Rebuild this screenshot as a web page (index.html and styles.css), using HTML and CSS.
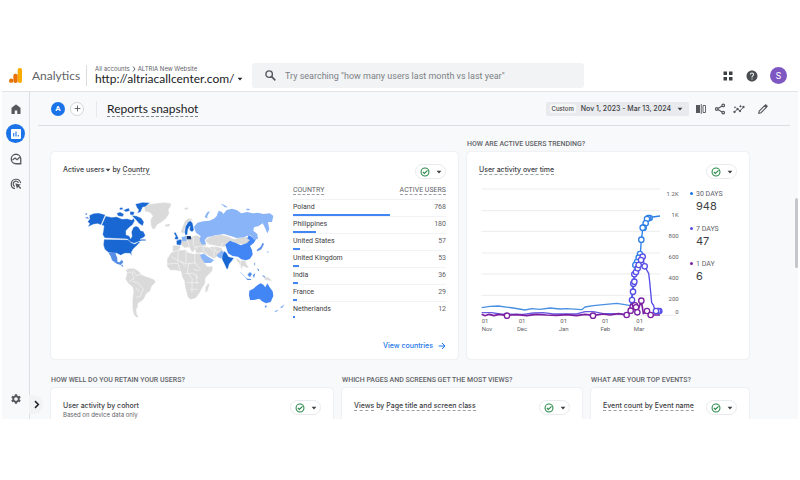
FILE: index.html
```html
<!DOCTYPE html>
<html lang="en">
<head>
<meta charset="utf-8">
<title>Analytics</title>
<link rel="stylesheet" href="styles.css">
</head>
<body>
<svg class="defs" aria-hidden="true">
  <symbol id="check" viewBox="0 0 24 24"><circle cx="12" cy="12" r="9.5" fill="none" stroke="#2b8a4b" stroke-width="2.6"/><path d="M7 12l3.5 3.5L18 8" fill="none" stroke="#2b8a4b" stroke-width="2.8"/></symbol>
  <symbol id="caret" viewBox="0 0 10 10"><path d="M1 3h8L5 7.500z" fill="currentColor"/></symbol>
</svg>
<div class="app">
  <header class="topbar">
    <svg class="logo" viewBox="0 0 39 45"><rect x="26" y="0" width="13" height="45" rx="6" fill="#f9ab00"/><rect x="13" y="17" width="13" height="28" rx="6" fill="#e8710a"/><circle cx="6.500" cy="38" r="6.500" fill="#e37400"/></svg>
    <span class="brand">Analytics</span>
    <div class="property">
      <div class="crumbs">All accounts <svg class="chev" viewBox="0 0 8 12"><path d="M2 1l4 5-4 5" fill="none" stroke="currentColor" stroke-width="2"/></svg> ALTRIA New Website</div>
      <button class="url">http://altriacallcenter.com/<svg class="caret"><use href="#caret"/></svg></button>
    </div>
    <label class="search">
      <svg viewBox="0 0 24 24"><circle cx="9.500" cy="9.500" r="6" fill="none" stroke="#55595e" stroke-width="2.600"/><path d="M14 14l7 7" stroke="#55595e" stroke-width="3"/></svg>
      <input type="text" aria-label="Search" placeholder="Try searching &quot;how many users last month vs last year&quot;">
    </label>
    <div class="account">
      <button aria-label="Apps"><svg viewBox="0 0 24 24" fill="#3c4043"><path d="M3 3h7v7H3zM14 3h7v7h-7zM3 14h7v7H3zM14 14h7v7h-7z"/></svg></button>
      <button aria-label="Help"><svg viewBox="0 0 24 24" fill="#4a4d51"><path d="M12 1C5.900 1 1 5.900 1 12s4.900 11 11 11 11-4.900 11-11S18.100 1 12 1zm1 18h-2v-2h2v2zm2.070-7.750l-.9.920C13.450 12.900 13 13.500 13 15h-2v-.5c0-1.100.45-2.100 1.170-2.830l1.240-1.260c.37-.36.59-.86.59-1.410 0-1.100-.9-2-2-2s-2 .9-2 2H8c0-2.210 1.790-4 4-4s4 1.790 4 4c0 .88-.36 1.680-.93 2.250z"/></svg></button>
      <button class="avatar">S</button>
    </div>
  </header>
  <div class="body">
    <nav class="rail">
      <a href="#" aria-label="Home"><svg viewBox="0 0 24 24" fill="#55595e"><path d="M3 22V10.500a2 2 0 0 1 .8-1.600L11 3.400a1.700 1.700 0 0 1 2 0l7.200 5.500a2 2 0 0 1 .8 1.600V22h-6.500v-7h-5v7z"/></svg></a>
      <a href="#" class="on" aria-label="Reports"><svg viewBox="0 0 24 24"><rect x="2" y="2" width="20" height="20" rx="2" fill="#fff"/><path d="M7.500 10v7M12 7v10M16.500 14v3" stroke="#1a73e8" stroke-width="2.200"/></svg></a>
      <a href="#" aria-label="Explore"><svg viewBox="0 0 24 24" fill="none" stroke="#55595e" stroke-width="2.600"><path d="M21.500 21.500H12A9.500 9.500 0 1 1 21.500 12z"/><path d="M5 14l5-4 4 3.500 5.500-5"/></svg></a>
      <a href="#" aria-label="Advertising"><svg viewBox="0 0 24 24" fill="none" stroke="#55595e" stroke-width="2.400"><path d="M10 21.300A9.500 9.500 0 1 1 21.300 10"/><path d="M9.500 17A5.600 5.600 0 1 1 17 9.500"/><path d="M10.500 10.500l3.500 11 2.200-4 4.300 4.500 2-2-4.500-4.300 4-2z" fill="#55595e" stroke="none"/></svg></a>
      <a href="#" class="admin" aria-label="Admin"><svg viewBox="0 0 24 24" fill="#55595e"><path d="M19.140 12.940c.04-.3.060-.61.060-.94 0-.32-.02-.64-.07-.94l2.030-1.580c.18-.14.230-.41.120-.61l-1.920-3.320c-.12-.22-.37-.29-.59-.22l-2.390.96c-.5-.38-1.030-.7-1.620-.94l-.36-2.540c-.04-.24-.24-.41-.48-.41h-3.840c-.24 0-.43.170-.47.410l-.36 2.540c-.59.240-1.130.57-1.620.94l-2.390-.96c-.22-.08-.47 0-.59.220L2.740 8.870c-.12.210-.08.470.120.610l2.030 1.580c-.05.3-.09.630-.09.940s.020.640.070.940l-2.030 1.580c-.18.140-.23.410-.12.610l1.920 3.320c.12.220.37.290.59.220l2.390-.96c.5.380 1.030.7 1.620.94l.36 2.540c.05.240.24.410.48.410h3.840c.24 0 .44-.17.470-.41l.36-2.540c.59-.24 1.130-.56 1.620-.94l2.390.96c.22.080.47 0 .59-.22l1.920-3.320c.12-.22.070-.47-.12-.61l-2.010-1.580zM12 15.600c-1.980 0-3.600-1.620-3.600-3.600s1.620-3.600 3.600-3.600 3.600 1.620 3.600 3.600-1.620 3.600-3.600 3.600z"/></svg></a>
      <button class="expand" aria-label="Expand"><svg viewBox="0 0 12 12"><path d="M4 1.500L8.500 6 4 10.500" fill="none" stroke="#202124" stroke-width="2"/></svg></button>
    </nav>
    <main>
      <div class="toolbar">
        <button class="badge">A</button>
        <button class="add" aria-label="Add comparison"><svg viewBox="0 0 12 12"><path d="M6 1v10M1 6h10" stroke="#55595e" stroke-width="1.500"/></svg></button>
        <h1><span>Reports snapshot</span></h1>
        <button class="date"><span class="chip">Custom</span>Nov 1, 2023 - Mar 13, 2024<svg class="caret"><use href="#caret"/></svg></button>
        <div class="tools">
          <button aria-label="Compare"><svg viewBox="0 0 24 24"><path d="M2 4h8v16H2z" fill="#55595e"/><path d="M12.500 2v20M16 5h5v14h-5z" fill="none" stroke="#55595e" stroke-width="1.800"/></svg></button>
          <button aria-label="Share"><svg viewBox="0 0 24 24" fill="none" stroke="#55595e" stroke-width="2.400"><path d="M8 11l8-5M8 13l8 5"/><circle cx="5.500" cy="12" r="2.600"/><circle cx="18.500" cy="4.800" r="2.600"/><circle cx="18.500" cy="19.200" r="2.600"/></svg></button>
          <button aria-label="Insights"><svg viewBox="0 0 24 24" fill="#55595e"><path d="M3 18l6-6 5 4 7-8" fill="none" stroke="#55595e" stroke-width="2"/><circle cx="3" cy="18" r="2.300"/><circle cx="9" cy="12" r="2.300"/><circle cx="14" cy="16" r="2.300"/><circle cx="21" cy="8" r="2.300"/><path d="M15 3l1 2.500L18.500 6.500 16 7.500 15 10l-1-2.500-2.500-1L14 5.500zM4 6l.8 1.700 1.700.8-1.700.8L4 11l-.8-1.700-1.700-.8 1.700-.8z"/></svg></button>
          <button class="edit" aria-label="Edit"><svg viewBox="0 0 24 24"><path d="M3.500 20.500l1-4.500L15 5.500l3.500 3.500L8 19.500z" fill="none" stroke="#55595e" stroke-width="2.200"/><path d="M15 5l2.500-2.500 4 4L19 9z" fill="#55595e" stroke="#55595e"/></svg></button>
        </div>
      </div>
      <div class="content">
        <section class="row first">
          <article class="col">
            <h2>&nbsp;</h2>
            <div class="card tall">
              <div class="head"><h3>Active users<svg class="caret"><use href="#caret"/></svg> by <u>Country</u></h3><button class="pill" aria-label="Data quality"><svg class="ok"><use href="#check"/></svg><svg class="caret"><use href="#caret"/></svg></button></div>
              <div class="split">
                <svg class="map" viewBox="-21 0 681 390" role="img" aria-label="Active users by country">
                  <g fill="#dadada" stroke="#fff" stroke-width="1.500">
                    <path d="M222 48l18-6 22-3 20-2 22 3-2 10-6 8 2 12-8 14-14 12-14 8-8 14-8-2-4-12 0-16 6-10-8-10-16-4z"/>
                    <path d="M284 104l12-3 6 3-6 6-10 0zM340 57l8-5 10 2-8 6z"/>
                    <path d="M168 238l10-3 14 0 14 8 8 10 12 6 14 4 14 6 3 8-12 12-4 14-12 8-6 14-10 10-8 4-2 12-4 8 2 14 6 9-8 0-8-8-4-20 0-24 3-24-2-14-12-10-10-14 4-14z"/>
                    <path d="M168 248l18-2 6 20-14 8M190 240l8 16 18-2M188 274l18 6 14 18-10 22-12 2M196 294l14 12" fill="none"/>
                    <path d="M332 125l12-32 12-8 14 2-8 6-12 8-4 24-8 6zM318 150l14-4 16 4 20-12 16-2 14 12 12 18-10 6-12 10-14-2-8 8-8-16-14 2-10-8zM308 166l20 0 4 6-10 16-14 0z"/>
                    <path d="M303 188l20-7 26-2 4 8 18 4 20-2 10 24 10 16 18 0-2 14-20 20-2 18-10 16-6 12-12 16-16 4-8-8-8-30-2-18-6-10-4-18-16-4-16 0-10-12 0-22zM406 292l8-12 5 2-6 22-8 4z"/>
                    <path d="M304 200l20 12 24 10 30-4M324 183v30M348 180v40M374 190v28l18 20M292 222l32-2 6 22M332 212l16 20M346 250h24l16 14M356 220l-4 28 18 22M370 238l18 4M350 278h36M360 298h22M366 268v40M378 252l4 30" fill="none"/>
                    <path d="M404 150l20-12 26-5 24 6 18 8 22-6 24 0 14 8-8 10-22 6-24-4-12-8-16 16-18 4-16-6-20-2zM374 172l20-4 24 4 14-4 22 4 8 14-18 12-12 8-16-8-20-10-18 2zM498 204l14 8 14-2 4 14 8 8-8 2-12-6-2 12-10-22-8-8zM582 260l14 2 12 12-12-2-12-2z"/>
                    <path d="M400 170v12l14 12M418 172l14 12v18M430 168l8 18 22 0M412 158l20 12 26 0M458 158l-6 14M352 150l6 20M370 140v24l14 12M384 150h22M510 210l2 18" fill="none"/>
                  </g>
                  <g fill="#1967d2" stroke="#fff" stroke-width="1.200">
                    <path d="M58 76l14-6 14-1 20 5-13 31-10-4-12 2-18 8 6-10-6-6 6-8z"/>
                    <path d="M107 78L125 82 140 80 156 87 172 86 186 90 190 84 194 92 188 104 178 112 168 122 168 134 178 138 182 146 186 138 184 126 190 112 198 108 206 112 212 122 220 124 226 136 222 142 210 148 226 148 228 152 214 152 204 156 192 160 180 156 172 147 104 144 98 134 102 108 95 105z"/>
                    <path d="M102 148L174 149 184 158 194 162 206 155 210 157 200 167 190 177 184 187 186 197 180 190 164 190 152 196 140 190 116 188 104 178 100 164z"/>
                    <path d="M196 42l22-5 22 1-14 12-8 2-6 14-10 4 4-10-6-8zM184 76L200 78 214 84 222 96 218 108 206 100 198 90zM140 70l10-4 12 6-4 8-14-2zM160 60l16-6 4 8-12 4zM180 64l14 2-4 10-10-2zM148 54l8-2 4 6-10 2z"/>
                    <path d="M344 128L346 110 354 96 362 92 368 100 372 120 366 126 358 120 360 108 354 118 352 134 346 136zM319 152l12-4 5 4-4 14-12-2zM313 147l4-8-6-10 6-2 8 16 0 6z"/>
                    <path d="M456 188L464 184 470 190 476 200 492 204 486 212 478 222 474 236 470 238 464 224 456 208z"/>
                  </g>
                  <path d="M44 72l8-3-2 6zM44 84l10-4 2 6z" fill="#568ee5"/>
                  <g fill="#4285f4">
                    <path d="M116 189l20 0 6 16 0 10 6 2 8-8 4 8-8 8-12-4-14-10-4-12zM152 225l6-1 2 8z" fill="#568ee5"/>
                    <path d="M466 164L480 152 496 158 512 166 530 160 540 150 532 146 536 134 546 142 558 148 552 158 540 168 546 180 548 194 540 206 528 211 514 208 504 200 488 198 474 190z"/>
                    <path d="M538 302L550 296 562 286 572 280 580 284 586 292 592 280 598 290 608 304 610 318 602 336 588 340 576 334 568 326 552 330 540 330 537 316zM584 347l7 0-4 7z"/>
                    <path d="M510 246l16 16 6 8 12 0-2-3-10-1-20-19zM532 254l8-8 6 6-6 10zM548 256l8-6-4 14zM552 216l4 6-2 6zM562 234l6 6-4 4zM560 180l12-10 6-12 4 4-8 16-12 6zM576 256l8 2 0 6z" fill="#568ee5"/>
                  </g>
                  <g fill="#8ab4f8">
                    <path d="M372 110L382 98 400 94 418 92 432 86 440 78 446 62 456 66 460 72 470 60 486 56 500 60 514 70 532 66 548 70 564 68 580 72 600 70 610 78 606 96 594 96 598 118 592 130 584 112 578 100 566 108 552 112 550 122 562 132 564 146 552 150 540 134 522 142 500 144 482 138 462 132 436 136 412 142 404 150 408 162 396 164 388 150 392 138 378 128 374 118zM404 80l8-14 8-2-8 14 0 8zM452 42l10 2 12 8-8 0zM528 56l10 0 2 5-10 0z"/>
                    <path d="M390 194l12-3 10 8 14 8 6 4-10 8-18 0-10-14zM334 142l14-4 2 14-12 2zM440 196l14-14 8 4-8 20-10-4z"/>
                  </g>
                  <path d="M350 138l12 0 2 10-14 0z" fill="#13366f"/>
                  <path d="M614 364l8-5 2 3-8 5zM630 352l14-9-8 12zM590 190l4-8 2 4z" fill="#8ab4f8"/>
                </svg>
                <table>
                  <thead><tr><th><span>COUNTRY</span></th><th><span>ACTIVE USERS</span></th></tr></thead>
                  <tbody>
                    <tr><td>Poland<i style="width:94%"></i></td><td>768</td></tr>
                    <tr><td>Philippines<i style="width:22%"></i></td><td>180</td></tr>
                    <tr><td>United States<i style="width:7%"></i></td><td>57</td></tr>
                    <tr><td>United Kingdom<i style="width:6%"></i></td><td>53</td></tr>
                    <tr><td>India<i style="width:5%"></i></td><td>36</td></tr>
                    <tr><td>France<i style="width:4%"></i></td><td>29</td></tr>
                    <tr><td>Netherlands<i style="width:2%"></i></td><td>12</td></tr>
                  </tbody>
                </table>
              </div>
              <a href="#" class="more">View countries <svg viewBox="0 0 12 12"><path d="M1 6h9M6 1.500L10.500 6 6 10.500" fill="none" stroke="currentColor" stroke-width="1.500"/></svg></a>
            </div>
          </article>
          <article class="col">
            <h2>HOW ARE ACTIVE USERS TRENDING?</h2>
            <div class="card tall">
              <div class="head"><h3><u>User activity over time</u></h3><button class="pill" aria-label="Data quality"><svg class="ok"><use href="#check"/></svg><svg class="caret"><use href="#caret"/></svg></button></div>
              <div class="trend">
                <svg class="chart" viewBox="-363 162 612 450" role="img" aria-label="User activity over time">
                  <path d="M-355 177H180M-355 242H180M-355 304H180M-355 369H180M-355 432H180M-355 496H180M-355 556H230" stroke="#ececec" stroke-width="3"/>
                  <g text-anchor="end"><text x="236" y="198">1.2K</text><text x="236" y="262">1K</text><text x="236" y="324">800</text><text x="236" y="388">600</text><text x="236" y="450">400</text><text x="236" y="514">200</text><text x="236" y="551">0</text></g>
                  <text x="-355" y="580">01</text><text x="-355" y="603">Nov</text>
                  <g text-anchor="middle"><text x="-234" y="580">01</text><text x="-234" y="603">Dec</text><text x="-109" y="580">01</text><text x="-109" y="603">Jan</text><text x="16" y="580">01</text><text x="16" y="603">Feb</text><text x="119" y="580">01</text><text x="117" y="603">Mar</text></g>
                  <g fill="none" stroke-width="4" stroke-linejoin="round">
                    <path stroke="#4a90e2" d="M-355 533L-330 529-305 528-260 534-225 540-205 536-180 538-150 534-120 537-100 536-55 539-45 531-20 527 10 524 50 520 70 523 92 527"/>
                    <path stroke="#2f7fe8" d="M92 526L100 460 104 428 108 400 121 372 124 329 129 293 137 280 141 267 148 262 158 261 180 258"/>
                    <path stroke="#6a5be0" d="M-355 548L-325 548-300 552-230 553-200 549-170 548-140 552-70 552-45 545-20 545 10 551 50 551 80 553"/>
                    <path stroke="#574ee6" d="M92 542L96 510 99 485 101 457 106 430 114 405 128 380 134 409 146 430 149 455 155 518 160 525 164 537 176 543"/>
                    <path stroke="#7b1fa2" stroke-width="5" d="M-355 553L-345 557-333 553-318 557-304 553-280 556-250 554-220 557-190 553-160 555-130 556-100 554-70 557-45 553-21 556 10 552 30 555 55 551 80 555 92 542 98 530 112 547 124 512 130 551 141 543 152 555 180 555"/>
                  </g>
                  <g fill="#fff" stroke-width="4">
                    <g stroke="#2f7fe8"><circle cx="149" cy="264" r="8"/><circle cx="145" cy="264" r="8"/><circle cx="141" cy="267" r="8"/><circle cx="137" cy="280" r="8"/><circle cx="131" cy="293" r="8"/><circle cx="128" cy="293" r="8"/><circle cx="124" cy="329" r="8"/><circle cx="120" cy="372" r="8"/><circle cx="116" cy="383" r="8"/><circle cx="111" cy="396" r="8"/><circle cx="106" cy="405" r="8"/></g>
                    <g stroke="#574ee6"><circle cx="96" cy="510" r="8"/><circle cx="99" cy="485" r="8"/><circle cx="100" cy="461" r="8"/><circle cx="103" cy="455" r="8"/><circle cx="103" cy="433" r="8"/><circle cx="108" cy="426" r="8"/><circle cx="113" cy="415" r="8"/><circle cx="116" cy="405" r="8"/><circle cx="128" cy="380" r="8"/><circle cx="123" cy="390" r="8"/><circle cx="134" cy="409" r="8"/><circle cx="178" cy="543" r="8"/><circle cx="174" cy="543" r="8"/><circle cx="168" cy="543" r="8"/></g>
                    <g stroke="#7b1fa2"><circle cx="-279" cy="557" r="8"/><circle cx="-21" cy="557" r="8"/><circle cx="80" cy="555" r="8"/><circle cx="98" cy="530" r="8"/><circle cx="105" cy="526" r="8"/><circle cx="108" cy="532" r="8"/><circle cx="92" cy="542" r="8"/><circle cx="112" cy="547" r="8"/><circle cx="124" cy="512" r="8"/><circle cx="141" cy="543" r="8"/><circle cx="152" cy="555" r="8"/></g>
                  </g>
                </svg>
                <dl>
                  <dt class="d30">30 DAYS</dt><dd>948</dd>
                  <dt class="d7">7 DAYS</dt><dd>47</dd>
                  <dt class="d1">1 DAY</dt><dd>6</dd>
                </dl>
              </div>
            </div>
          </article>
        </section>
        <section class="row second">
          <article class="col">
            <h2>HOW WELL DO YOU RETAIN YOUR USERS?</h2>
            <div class="card"><div class="head"><div><h3>User activity by cohort</h3><p>Based on device data only</p></div><button class="pill" aria-label="Data quality"><svg class="ok"><use href="#check"/></svg><svg class="caret"><use href="#caret"/></svg></button></div></div>
          </article>
          <article class="col">
            <h2>WHICH PAGES AND SCREENS GET THE MOST VIEWS?</h2>
            <div class="card"><div class="head"><h3><u>Views</u> by <u>Page title and screen class</u></h3><button class="pill" aria-label="Data quality"><svg class="ok"><use href="#check"/></svg><svg class="caret"><use href="#caret"/></svg></button></div></div>
          </article>
          <article class="col">
            <h2>WHAT ARE YOUR TOP EVENTS?</h2>
            <div class="card"><div class="head"><h3><u>Event count</u> by <u>Event name</u></h3><button class="pill" aria-label="Data quality"><svg class="ok"><use href="#check"/></svg><svg class="caret"><use href="#caret"/></svg></button></div></div>
          </article>
        </section>
      </div>
      <div class="scroll"></div>
    </main>
  </div>
</div>
</body>
</html>
```
FILE: styles.css
```css
* { box-sizing: border-box; }
body {
  margin: 0;
  height: 100vh;
  padding: 60px 0 61px;
  background: #fff;
  color: #3c4043;
  font-family: Roboto, "Liberation Sans", sans-serif;
  font-size: 7px;
}
.defs { position: absolute; width: 0; height: 0; }
svg { display: block; flex: none; }
button { border: 0; padding: 0; background: none; font: inherit; color: inherit; display: flex; align-items: center; justify-content: center; }
h1, h2, h3, p, dl, dd { margin: 0; font-weight: 400; }
a { text-decoration: none; }
.caret { width: 6px; height: 6px; }

.app { height: 100%; display: flex; flex-direction: column; overflow: hidden; padding: 0 2px; }

.topbar { display: flex; align-items: center; height: 32px; padding: 0 11px 0 7px; border-bottom: 1px solid #e1e3e6; }
.logo { width: 13px; height: 15px; }
.brand { margin-left: 10px; width: 54px; font: 12px Lato, sans-serif; color: #5f6368; }
.property { width: 166px; padding-left: 8px; border-left: 1px solid #dadce0; }
.crumbs { display: flex; align-items: center; gap: 2px; font: 6px/7px Inter, sans-serif; color: #5f6368; white-space: nowrap; }
.chev { width: 4px; height: 6px; }
.url { gap: 2px; font: 12px/14px Lato, sans-serif; color: #202124; }
.search { flex: 0 1 332px; display: flex; align-items: center; gap: 8px; height: 25px; padding: 0 12px; background: #f1f3f4; border-radius: 3px; }
.search svg { width: 13px; height: 13px; }
.search input { flex: 1; min-width: 0; border: 0; padding: 0; background: none; outline: 0; font: 9px Roboto, sans-serif; }
.search input::placeholder { color: #7d8186; opacity: 1; }
.account { margin-left: auto; display: flex; align-items: center; gap: 12px; }
.account svg { width: 12px; height: 12px; }
.avatar { width: 17px; height: 17px; border-radius: 50%; background: #7e57c2; color: #fff; font-size: 9px; }

.body { flex: 1; display: flex; min-height: 0; background: #f8f9fb; }
.rail { position: relative; width: 28px; display: flex; flex-direction: column; align-items: center; gap: 6px; padding: 7px 0 11px; border-right: 1px solid #dcdee1; }
.rail a { width: 19px; height: 19px; display: flex; align-items: center; justify-content: center; border-radius: 50%; }
.rail svg { width: 12px; height: 12px; }
.rail .on { background: #1a73e8; }
.rail .admin { margin-top: auto; }
.rail .expand { position: absolute; left: 27px; bottom: 5px; width: 14px; height: 19px; border-radius: 0 9px 9px 0; background: #f1f3f5; }
.expand svg { width: 9px; height: 9px; }

main { position: relative; flex: 1; min-width: 0; overflow: hidden; }
.toolbar { display: flex; align-items: center; height: 34px; margin: 0 8px; padding: 0 21px 0 13px; border-bottom: 1px solid #dcdee1; }
.badge { width: 14px; height: 14px; border-radius: 50%; background: #1a73e8; color: #fff; font-weight: 700; font-size: 8px; }
.add { width: 14px; height: 14px; margin-left: 5px; border: 1px solid #d3d5d9; border-radius: 50%; background: #fff; }
.add svg { width: 7px; height: 7px; }
h1 { margin-left: 12px; padding-left: 10px; border-left: 1px solid #e6e8eb; font: 12px/15px Lato, sans-serif; color: #202124; }
h1 span { display: block; border-bottom: 1px dashed #80868b; }
.date { margin-left: auto; height: 14px; padding: 0 6px 0 4px; border-radius: 2px; background: #e8eaed; font: 500 7px Inter, sans-serif; color: #3c4043; }
.chip { margin-right: 5px; padding: 1px 2px; border-radius: 2px; background: #f4f5f6; font-size: 6px; }
.date .caret { margin-left: 6px; }
.tools { display: flex; align-items: center; gap: 7px; margin-left: 6px; }
.tools svg { width: 12px; height: 12px; }
.tools .edit { margin-left: 5px; }

.content { padding: 12px 49px 0 21px; }
.row { display: grid; gap: 9px; }
.first { grid-template-columns: 407fr 282fr; }
.second { grid-template-columns: 282fr 240fr 158fr; margin-top: 15px; }
.col { min-width: 0; }
h2 { font: 500 7px/13px Roboto, sans-serif; white-space: nowrap; color: #5f6368; }
.card { margin-top: 1px; padding: 12px 12px 8px; height: 60px; background: #fff; border-radius: 4px; box-shadow: 0 0 2px #dadce0; }
.tall { height: auto; min-height: 207px; display: flex; flex-direction: column; }
.head { display: flex; justify-content: space-between; align-items: flex-start; }
h3 { font: 500 7px/11px Inter, sans-serif; white-space: nowrap; }
h3 .caret { display: inline-block; vertical-align: -1px; }
u { text-decoration: none; border-bottom: 1px dashed #9aa0a6; }
.head p { font: 6px/8px Inter, sans-serif; color: #5f6368; }
.pill { width: 31px; height: 15px; gap: 6px; border: 1px solid #e8eaed; border-radius: 8px; }
.ok { width: 10px; height: 10px; }

.split { display: grid; grid-template-columns: 227fr 153fr; gap: 3px; align-items: start; margin-top: 7px; }
.map { width: 100%; margin-top: 4px; }
table { width: 100%; border-collapse: collapse; font-size: 7px; }
th { padding: 0; height: 13px; vertical-align: top; text-align: left; font-weight: 400; white-space: nowrap; border-bottom: 1px solid #f1f3f4; color: #5f6368; }
th span { border-bottom: 1px dashed #9aa0a6; }
th + th, td + td { text-align: right; width: 50px; }
td { padding: 0; line-height: 14px; vertical-align: top; border-bottom: 1px solid #f1f3f4; color: #3c4043; }
td + td { color: #5f6368; }
td i { display: block; height: 2px; background: #4285f4; }
tr:last-child td { border-bottom: 0; }
.more { margin-top: auto; align-self: flex-end; display: flex; align-items: center; gap: 5px; font: 500 7px/10px Inter, sans-serif; color: #1a73e8; }
.more svg { width: 8px; height: 8px; }

.trend { display: grid; grid-template-columns: 204fr 47fr; gap: 7px; margin-top: 5px; }
.chart { width: 100%; }
.chart text { font-size: 18px; fill: #5f6368; }
.trend dt { position: relative; padding-left: 6px; font: 7px/10px Roboto, sans-serif; color: #5f6368; white-space: nowrap; }
.trend dt::before { content: ""; position: absolute; left: 0; top: 3px; width: 3px; height: 3px; border-radius: 50%; background: #1a73e8; }
.trend .d7::before { background: #574ee6; }
.trend .d1::before { background: #7b1fa2; }
.trend dd { margin-bottom: 11px; padding-left: 6px; font: 11px/14px Inter, sans-serif; }
.trend dl { padding-top: 5px; }
.scroll { position: absolute; right: 0; top: 106px; width: 3px; height: 70px; border-radius: 2px; background: #c4c6c9; }
```
